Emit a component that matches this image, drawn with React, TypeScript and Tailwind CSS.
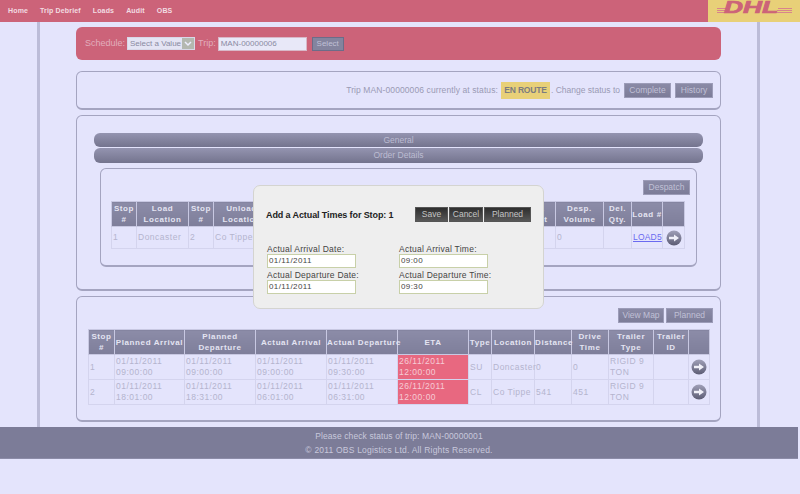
import React from 'react';

const btn = 'h-[15px] px-1 flex items-center justify-center whitespace-nowrap bg-gradient-to-b from-[#8a8aa6] to-[#7c7c98] border border-[#9c9cb8] text-[8.5px] text-[#c0c0d6]';
const th = 'border border-[#c8c8e2] bg-gradient-to-b from-[#8c8ca8] to-[#7e7e9a] text-[#e4e4f2] text-[8px] font-bold tracking-[0.6px] leading-[11px] text-center p-0';
const td = 'border border-[#d4d4ee] text-[#b4b4ce] text-[8.5px] tracking-[0.5px] leading-[11px] text-left align-middle px-[1px] p-0';
const darkBtn = 'h-[15px] flex items-center justify-center bg-gradient-to-b from-[#2e2e2e] to-[#585858] border border-[#555]';

const ArrowIcon = () => (
  <svg width="16" height="16" viewBox="0 0 16 16" className="mx-auto block">
    <defs>
      <linearGradient id="arrowFill" x1="0" y1="0" x2="0" y2="1">
        <stop offset="0" stopColor="#a0a0b8" />
        <stop offset="1" stopColor="#5c5c74" />
      </linearGradient>
    </defs>
    <circle cx="8" cy="8" r="7.5" fill="url(#arrowFill)" />
    <path d="M3 6.8h5V4.4L13 8l-5 3.6V9.2H3z" fill="#f0f0f8" />
  </svg>
);

const Panel = ({ className, children }: { className: string; children: React.ReactNode }) => (
  <div className={`rounded-[6px] border border-[#a4a4c0] border-b-2 ${className}`}>{children}</div>
);

const DhlLogo = () => (
  <svg width="92" height="22" viewBox="0 0 92 22">
    <rect width="92" height="22" fill="#e8d078" />
    <path d="M9 8h13v1H9zM9 10h12v1H9zM9 12h11v1H9zM70 8h14v1H70zM69 10h15v1H69zM68 12h16v1H68z" fill="#d8848c" />
    <text x="43" y="13" textAnchor="middle" fontFamily="'Liberation Sans', sans-serif" fontWeight="700" fontStyle="italic" fontSize="16" textLength="54" lengthAdjust="spacingAndGlyphs" stroke="#cc6379" strokeWidth="0.7" fill="#cc6379">DHL</text>
  </svg>
);

const orderCols = [
  ['w-[25px]', 'Stop #', '1'],
  ['w-[52px]', 'Load Location', 'Doncaster'],
  ['w-[25px]', 'Stop #', '2'],
  ['w-[56px]', 'Unload Location', 'Co Tippe'],
  ['w-[120px]', '', ''],
  ['w-[120px]', '', ''],
  ['w-[46px]', 'Desp. Weight', ''],
  ['w-[48px]', 'Desp. Volume', '0'],
  ['w-[28px]', 'Del. Qty.', ''],
  ['w-[31px]', 'Load #', ''],
];

const tripRows = [
  { stop: '1', pa: ['01/11/2011', '09:00:00'], pd: ['01/11/2011', '09:00:00'], aa: ['01/11/2011', '09:00:00'], ad: ['01/11/2011', '09:30:00'], type: 'SU', loc: 'Doncaster', dist: '0', drive: '0' },
  { stop: '2', pa: ['01/11/2011', '18:01:00'], pd: ['01/11/2011', '18:31:00'], aa: ['01/11/2011', '06:01:00'], ad: ['01/11/2011', '06:31:00'], type: 'CL', loc: 'Co Tippe', dist: '541', drive: '451' },
];

const Lines = ({ v }: { v: string[] }) => (
  <>
    {v[0]}
    <br />
    {v[1]}
  </>
);

const Field = ({ label, value }: { label: string; value: string }) => (
  <div>
    <div className="text-[8.5px] leading-[10px] text-[#444] tracking-[0.25px]">{label}</div>
    <div className="h-[14px] w-[89px] bg-white border border-[#c8d0a8] px-[1px] flex items-center text-[8px] tracking-[0.4px] text-[#444]">{value}</div>
  </div>
);

export default function App() {
  return (
    <div className="relative w-[800px] h-[494px] overflow-hidden bg-[#e4e4fc] font-['Liberation_Sans',sans-serif]">
      <div className="h-[22px] bg-[#cc6379] flex items-center justify-between">
        <div className="flex gap-[12px] pl-[8px] text-[7px] font-bold tracking-[0.15px] text-[#f2dce2]">
          <span>Home</span>
          <span>Trip Debrief</span>
          <span>Loads</span>
          <span>Audit</span>
          <span>OBS</span>
        </div>
        <DhlLogo />
      </div>

      <div className="ml-[37px] w-[723px] h-[405px] border-x-[3px] border-[#bcbcd8] px-[36px] pt-[5px] flex flex-col">
        <div className="h-[33px] bg-[#cc6379] rounded-[6px] flex items-center pl-[9px] text-[9px] text-[#e2aebc]">
          <span>Schedule:</span>
          <div className="ml-[2px] h-[13px] w-[68px] bg-[#e4e4f4] border border-[#d8d8e8] flex items-center justify-between pl-[2px] text-[8px] whitespace-nowrap text-[#8a8aa2]">
            Select a Value
            <span className="w-[12px] h-[11px] bg-[#b4b8b0] flex items-center justify-center">
              <svg width="8" height="6" viewBox="0 0 8 6"><path d="M1 1l3 3 3-3" fill="none" stroke="#eef" strokeWidth="1.5" /></svg>
            </span>
          </div>
          <span className="ml-[3px]">Trip:</span>
          <div className="ml-[2px] h-[14px] w-[89px] bg-[#e8e8f8] border border-[#d8b8c8] flex items-center px-[2px] text-[8px] text-[#8a8aa2]">MAN-00000006</div>
          <div className="ml-[5px] h-[14px] w-[32px] bg-[#84849e] border border-[#6c6c88] flex items-center justify-center text-[8px] text-[#c0c0d6]">Select</div>
        </div>

        <Panel className="mt-[11px] h-[39px] flex items-center justify-end pr-[7px] text-[8.5px] text-[#9a9ab4]">
          <span className="tracking-[0.1px]">Trip MAN-00000006 currently at status:</span>
          <span className="ml-[3px] h-[17px] w-[49px] bg-[#e8d078] flex items-center justify-center font-bold tracking-[-0.2px] text-[#7c7c80]">EN ROUTE</span>
          <span className="ml-[1px]">. Change status to</span>
          <div className={`${btn} ml-[4px] w-[47px] h-[14px]`}>Complete</div>
          <div className={`${btn} ml-[4px] w-[38px] h-[14px]`}>History</div>
        </Panel>

        <Panel className="mt-[5px] h-[176px] pt-[17px] px-[17px]">
          <div className="h-[14px] rounded-[6px] bg-gradient-to-b from-[#9494b0] to-[#74748e] flex items-center justify-center text-[8.5px] text-[#bcbcd2]">General</div>
          <div className="mt-[1px] h-[15px] rounded-[6px] bg-gradient-to-b from-[#9494b0] to-[#74748e] flex items-center justify-center text-[8.5px] text-[#bcbcd2]">Order Details</div>
          <Panel className="mt-[5px] mx-[6px] h-[99px] pt-[11px] px-[7px]">
            <div className="flex justify-end mr-[-1px]">
              <div className={`${btn} w-[47px]`}>Despatch</div>
            </div>
            <table className="mt-[6px] ml-[3px] table-fixed border-collapse w-[573px]">
              <thead>
                <tr className="h-[25px]">
                  {orderCols.map(([w, h], i) => (
                    <th key={i} className={`${th} ${w}`}>{h}</th>
                  ))}
                  <th className={`${th} w-[22px]`}></th>
                </tr>
              </thead>
              <tbody>
                <tr className="h-[22px]">
                  {orderCols.map(([w, , v], i) => (
                    <td key={i} className={`${td} ${w}`}>
                      {i === 9 ? <span className="text-[#6a6af0] underline tracking-[0.2px]">LOAD5</span> : v}
                    </td>
                  ))}
                  <td className={td}><ArrowIcon /></td>
                </tr>
              </tbody>
            </table>
          </Panel>
        </Panel>

        <Panel className="mt-[5px] h-[126px] pt-[11px] px-[11px]">
          <div className="flex justify-end gap-[2px] mr-[-4px]">
            <div className={`${btn} w-[46px]`}>View Map</div>
            <div className={`${btn} w-[47px]`}>Planned</div>
          </div>
          <table className="mt-[6px] table-fixed border-collapse w-[621px]">
            <thead>
              <tr className="h-[25px]">
                <th className={`${th} w-[26px]`}>Stop #</th>
                <th className={`${th} w-[70px]`}>Planned Arrival</th>
                <th className={`${th} w-[71px]`}>Planned Departure</th>
                <th className={`${th} w-[71px]`}>Actual Arrival</th>
                <th className={`${th} w-[71px] tracking-[0.1px] whitespace-nowrap`}>Actual Departure</th>
                <th className={`${th} w-[71px]`}>ETA</th>
                <th className={`${th} w-[23px] tracking-[0.2px]`}>Type</th>
                <th className={`${th} w-[43px]`}>Location</th>
                <th className={`${th} w-[37px] tracking-[0.1px]`}>Distance</th>
                <th className={`${th} w-[37px]`}>Drive Time</th>
                <th className={`${th} w-[45px]`}>Trailer Type</th>
                <th className={`${th} w-[35px]`}>Trailer ID</th>
                <th className={`${th} w-[21px]`}></th>
              </tr>
            </thead>
            <tbody>
              {tripRows.map((r) => (
                <tr key={r.stop} className="h-[25px]">
                  <td className={td}>{r.stop}</td>
                  <td className={td}><Lines v={r.pa} /></td>
                  <td className={td}><Lines v={r.pd} /></td>
                  <td className={td}><Lines v={r.aa} /></td>
                  <td className={td}><Lines v={r.ad} /></td>
                  <td className={`${td} bg-[#e86880] text-[#f6ccd6]`}><Lines v={['26/11/2011', '12:00:00']} /></td>
                  <td className={td}>{r.type}</td>
                  <td className={`${td} tracking-[-0.1px]`}>{r.loc}</td>
                  <td className={td}>{r.dist}</td>
                  <td className={td}>{r.drive}</td>
                  <td className={td}><Lines v={['RIGID 9', 'TON']} /></td>
                  <td className={td}></td>
                  <td className={td}><ArrowIcon /></td>
                </tr>
              ))}
            </tbody>
          </table>
        </Panel>
      </div>

      <div className="w-[798px] h-[32px] bg-[#7c7c98] border-b border-[#8c8ca8] flex flex-col items-center justify-center gap-[4px] text-[8.5px] leading-[10px] text-[#c8c8dc]">
        <div className="tracking-[0.1px]">Please check status of trip: MAN-00000001</div>
        <div className="tracking-[0.2px]">© 2011 OBS Logistics Ltd. All Rights Reserved.</div>
      </div>

      {/* modal sits over the order table */}
      <div className="absolute left-[253px] top-[185px] w-[291px] h-[124px] rounded-[7px] bg-[#eeeeee] border border-[#d4d4d0]">
        <div className="absolute left-[12px] top-[23px] text-[9px] font-bold tracking-[-0.1px] text-[#222]">Add a Actual Times for Stop: 1</div>
        <div className="absolute left-[161px] top-[21px] flex gap-[1px] text-[8.5px] text-[#c4c4c4]">
          <div className={`${darkBtn} w-[33px]`}>Save</div>
          <div className={`${darkBtn} w-[34px]`}>Cancel</div>
          <div className={`${darkBtn} w-[47px]`}>Planned</div>
        </div>
        <div className="absolute left-[13px] top-[58px] grid grid-cols-[132px_132px] gap-y-[2px]">
          <Field label="Actual Arrival Date:" value="01/11/2011" />
          <Field label="Actual Arrival Time:" value="09:00" />
          <Field label="Actual Departure Date:" value="01/11/2011" />
          <Field label="Actual Departure Time:" value="09:30" />
        </div>
      </div>
    </div>
  );
}
